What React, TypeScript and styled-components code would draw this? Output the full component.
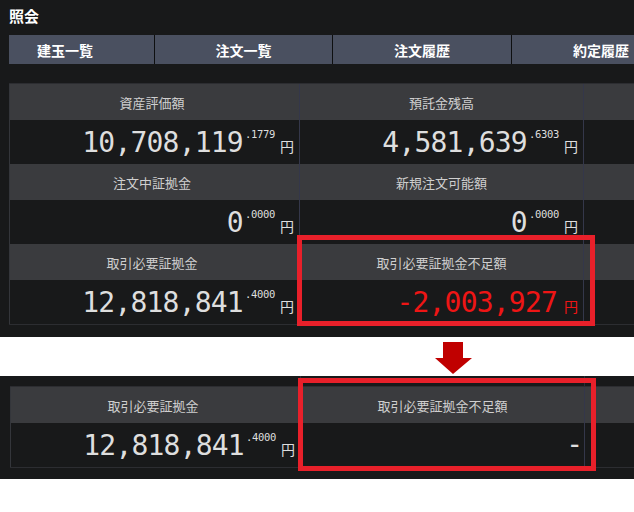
import React from 'react';
import styled, { createGlobalStyle } from 'styled-components';

const GlobalStyle = createGlobalStyle`
  body {
    margin: 0;
    background: #ffffff;
    font-family: "Noto Sans CJK JP", "Noto Sans", sans-serif;
  }
`;

const Page = styled.div`
  width: 634px;
  overflow: hidden;
`;

const Panel = styled.div<{ $pad: string }>`
  background: #18191a;
  padding: ${(p) => p.$pad};
`;

const Title = styled.div`
  color: #ffffff;
  font-size: 15px;
  font-weight: bold;
  line-height: 17px;
  height: 17px;
`;

const Tabs = styled.div`
  display: flex;
  margin-top: 11px;
  height: 29px;
  width: 700px;
`;

const Tab = styled.div<{ $w: number; $shift?: number }>`
  width: ${(p) => p.$w}px;
  flex-shrink: 0;
  background: #4a5060;
  color: #ffffff;
  font-size: 14px;
  font-weight: bold;
  display: flex;
  align-items: center;
  justify-content: center;
  padding-right: ${(p) => p.$shift || 0}px;
  box-sizing: border-box;
  & + & {
    border-left: 1px solid #0e0f10;
  }
`;

const Table = styled.div<{ $top: number; $left: number }>`
  position: relative;
  margin-top: ${(p) => p.$top}px;
  margin-left: ${(p) => p.$left}px;
  display: grid;
  grid-template-columns: 291px 284px 80px;
  border-top: 1px solid #2c2d31;
  border-bottom: 1px solid #2c2d31;
`;

const Head = styled.div<{ $first?: boolean }>`
  height: 36px;
  background: #3a3b3e;
  color: #cfcfcf;
  font-size: 13px;
  display: flex;
  align-items: center;
  justify-content: center;
  padding-right: ${(p) => (p.$first ? 5 : 0)}px;
  border-right: 1px solid #34374a;
  border-left: ${(p) => (p.$first ? '1px solid #34363b' : 'none')};
  box-sizing: border-box;
`;

const Value = styled.div<{ $first?: boolean }>`
  height: 44px;
  display: flex;
  align-items: flex-end;
  justify-content: flex-end;
  padding: 0 5px 7px 0;
  box-sizing: border-box;
  border-right: 1px solid #34374a;
  border-left: ${(p) => (p.$first ? '1px solid #34363b' : 'none')};
  color: #dedede;
`;

const Inner = styled.div`
  display: flex;
  align-items: baseline;
`;

const Amount = styled.span<{ $red?: boolean }>`
  font-family: "DejaVu Sans Mono", monospace;
  font-size: 28px;
  line-height: 28px;
  letter-spacing: -0.8px;
  color: ${(p) => (p.$red ? '#ee1515' : '#dedede')};
`;

const Frac = styled.span`
  font-family: "DejaVu Sans Mono", monospace;
  font-size: 10.5px;
  line-height: 10px;
  letter-spacing: -0.3px;
  align-self: flex-start;
  margin-left: 2px;
  color: #dedede;
`;

const Yen = styled.span<{ $red?: boolean }>`
  font-size: 14px;
  line-height: 16px;
  margin-left: ${(p) => (p.$red ? 7 : 5)}px;
  color: ${(p) => (p.$red ? '#ee1515' : '#dedede')};
`;

const Dash = styled.span`
  font-family: "DejaVu Sans Mono", monospace;
  font-size: 28px;
  line-height: 28px;
  margin: 0 -4px 1px 0;
  color: #dedede;
`;

const RedBox = styled.div<{ $top: number; $h: number }>`
  position: absolute;
  left: 288px;
  top: ${(p) => p.$top}px;
  width: 298px;
  height: ${(p) => p.$h}px;
  border: 5px solid #e8202a;
  box-sizing: border-box;
  pointer-events: none;
`;

const ArrowRow = styled.div`
  height: 39px;
  padding: 5px 0 0 435px;
  box-sizing: border-box;
`;

const Strip = styled.div`
  display: grid;
  grid-template-columns: 301px 284px 80px;
  height: 10px;
  & > div {
    border-right: 1px solid #2a2c36;
  }
`;

type Money = { int: string; frac?: string; red?: boolean };

function MoneyCell({ m, first }: { m: Money | null; first?: boolean }) {
  return (
    <Value $first={first}>
      {m ? (
        <Inner>
          <Amount $red={m.red}>{m.int}</Amount>
          {m.frac && <Frac>{m.frac}</Frac>}
          <Yen $red={m.red}>円</Yen>
        </Inner>
      ) : null}
    </Value>
  );
}

const rows: { labels: [string, string]; values: [Money, Money | null] }[] = [
  {
    labels: ['資産評価額', '預託金残高'],
    values: [
      { int: '10,708,119', frac: '.1779' },
      { int: '4,581,639', frac: '.6303' },
    ],
  },
  {
    labels: ['注文中証拠金', '新規注文可能額'],
    values: [
      { int: '0', frac: '.0000' },
      { int: '0', frac: '.0000' },
    ],
  },
  {
    labels: ['取引必要証拠金', '取引必要証拠金不足額'],
    values: [
      { int: '12,818,841', frac: '.4000' },
      { int: '-2,003,927', red: true },
    ],
  },
];

export default function App() {
  return (
    <Page>
      <GlobalStyle />
      <Panel $pad="7px 0 12px 9px">
        <Title>照会</Title>
        <Tabs>
          <Tab $w={145} $shift={33}>建玉一覧</Tab>
          <Tab $w={178}>注文一覧</Tab>
          <Tab $w={179}>注文履歴</Tab>
          <Tab $w={179}>約定履歴</Tab>
        </Tabs>
        <Table $top={19} $left={0}>
          {rows.map((r, i) => (
            <React.Fragment key={i}>
              <Head $first>{r.labels[0]}</Head>
              <Head>{r.labels[1]}</Head>
              <Head />
              <MoneyCell m={r.values[0]} first />
              <MoneyCell m={r.values[1]} />
              <Value />
            </React.Fragment>
          ))}
          <RedBox $top={151} $h={91} />
        </Table>
      </Panel>
      <ArrowRow>
        <svg width="37" height="32" viewBox="0 0 37 32">
          <path d="M8 0 H28 V16 H37 L18 32 L0 16 H8 Z" fill="#c00000" />
        </svg>
      </ArrowRow>
      <Panel $pad="0 0 11px 0">
        <Strip>
          <div />
          <div />
          <div />
        </Strip>
        <Table $top={0} $left={10}>
          <Head $first>取引必要証拠金</Head>
          <Head>取引必要証拠金不足額</Head>
          <Head />
          <MoneyCell m={{ int: '12,818,841', frac: '.4000' }} first />
          <Value>
            <Dash>-</Dash>
          </Value>
          <Value />
          <RedBox $top={-9} $h={93} />
        </Table>
      </Panel>
    </Page>
  );
}
